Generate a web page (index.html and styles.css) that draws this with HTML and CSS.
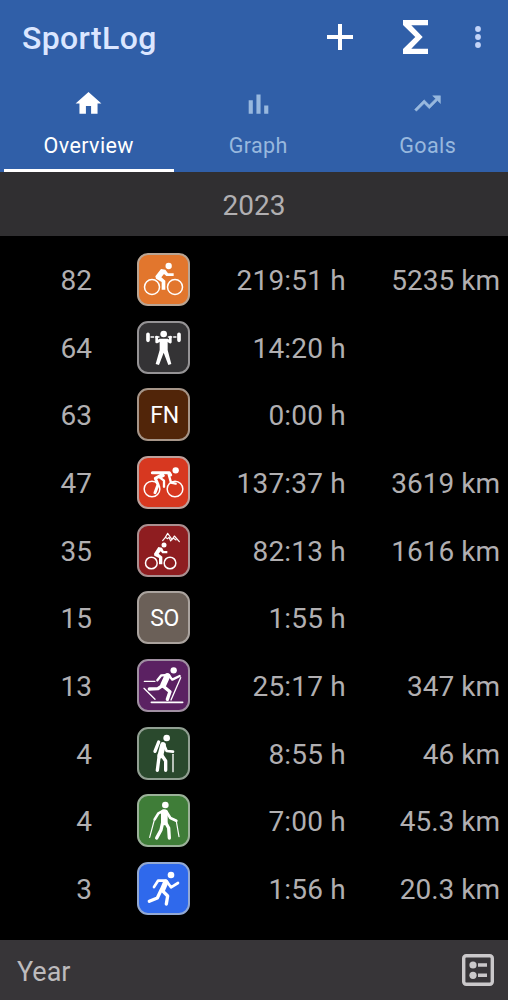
FILE: index.html
```
<!DOCTYPE html>
<html lang="en">
<head>
    <meta charset="UTF-8">
    <meta name="viewport" content="width=device-width, initial-scale=1.0">
    <title>SportLog</title>
    <link rel="stylesheet" href="styles.css">
</head>
<body>
    <div class="app">
        <header class="header">
            <div class="toolbar">
                <h1>SportLog</h1>
                <div class="actions">
                    <svg class="icon-add" viewBox="0 0 26 26"><path d="M0 13H26M13 0V26" fill="none" stroke="#fff" stroke-width="4"/></svg>
                    <svg class="icon-sum" viewBox="0 0 25 34"><path d="M0 0H25V5.3H8.3L19.7 17L8.3 28.7H25V34H0V29L12.3 17L0 5Z" fill="#fff"/></svg>
                    <svg class="icon-more" viewBox="0 0 6 22"><circle cx="3" cy="3" r="2.9"/><circle cx="3" cy="11" r="2.9"/><circle cx="3" cy="19" r="2.9"/></svg>
                </div>
            </div>
            <nav class="tabs">
                <a class="tab active">
                    <svg viewBox="0 0 24 24"><path d="M10 20v-6h4v6h5v-8h3L12 3 2 12h3v8z"/></svg>
                    <span>Overview</span>
                </a>
                <a class="tab">
                    <svg viewBox="0 0 24 24"><path d="M4.4 9.5h3.2V20H4.4zM10.4 5h3.2v15h-3.2zM16.4 13.5h3.2V20h-3.2z"/></svg>
                    <span>Graph</span>
                </a>
                <a class="tab">
                    <svg viewBox="0 0 24 24"><path stroke-width="0.4" d="M16 6l2.29 2.29-4.88 4.88-4-4L2 16.59 3.41 18l6-6 4 4 6.3-6.29L22 12V6z"/></svg>
                    <span>Goals</span>
                </a>
            </nav>
        </header>

        <h2 class="period">2023</h2>

        <main class="list">
            <div class="row">
                <span class="count">82</span>
                <div class="sport cycling">
                    <svg viewBox="27 27 147 147">
                        <circle cx="116" cy="60" r="9.5" class="fill"/>
                        <circle cx="66" cy="123" r="22.5" class="wheel"/><circle cx="135" cy="123" r="22.5" class="wheel"/>
                        <path d="M76 91L93 69L106 71L114 82H131V90H109L102 84L94 94L106 104V131H95V108L78 98Z" class="fill"/>
                    </svg>
                </div>
                <span class="time">219:51 h</span>
                <span class="distance">5235 km</span>
            </div>
            <div class="row">
                <span class="count">64</span>
                <div class="sport weights">
                    <svg viewBox="27 27 147 147">
                        <circle cx="101" cy="60" r="10" class="fill"/>
                        <path d="M54 61V79M147 61V79" class="line" stroke-width="11"/>
                        <path d="M63 69H71M77 69H87M115 69H125M131 69H138" class="line" stroke-width="4"/>
                        <path d="M80 69V84L91 78H111L121 84V69" class="line" stroke-width="8"/>
                        <path d="M89 76H113V108L124 150L115 153L101 116L87 153L77 150L89 108Z" class="fill"/>
                    </svg>
                </div>
                <span class="time">14:20 h</span>
                <span class="distance"></span>
            </div>
            <div class="row">
                <span class="count">63</span>
                <div class="sport fn">FN</div>
                <span class="time">0:00 h</span>
                <span class="distance"></span>
            </div>
            <div class="row">
                <span class="count">47</span>
                <div class="sport racing">
                    <svg viewBox="27 27 147 147">
                        <circle cx="137" cy="64" r="9.5" class="fill"/>
                        <circle cx="66" cy="120" r="23.5" class="wheel"/><circle cx="135" cy="120" r="23.5" class="wheel"/>
                        <path d="M67 71H118L122 78" class="line" stroke-width="9"/>
                        <path d="M98 76L76 88L84 107L75 131" class="line" stroke-width="9"/>
                        <path d="M101 80L90 86L102 95V113" class="line" stroke-width="7"/>
                        <path d="M116 76L123 101L137 104" class="line" stroke-width="7"/>
                    </svg>
                </div>
                <span class="time">137:37 h</span>
                <span class="distance">3619 km</span>
            </div>
            <div class="row">
                <span class="count">35</span>
                <div class="sport mtb">
                    <svg viewBox="27 27 147 147">
                        <circle cx="102" cy="84" r="7.5" class="fill"/>
                        <circle cx="64" cy="138" r="17.5" class="wheel"/><circle cx="120" cy="138" r="17.5" class="wheel"/>
                        <path d="M72 110L85 90L96 92L101 102H112V109H97L92 103L86 110L97 119V142H87V123L73 116Z" class="fill"/>
                        <path d="M98 71L106 61L113 49L121 60L126 68L133 57L148 74M106 61L113 65L117 61L122 72L129 63L138 69" class="line" stroke-width="3.5"/>
                    </svg>
                </div>
                <span class="time">82:13 h</span>
                <span class="distance">1616 km</span>
            </div>
            <div class="row">
                <span class="count">15</span>
                <div class="sport so">SO</div>
                <span class="time">1:55 h</span>
                <span class="distance"></span>
            </div>
            <div class="row">
                <span class="count">13</span>
                <div class="sport skiing">
                    <svg viewBox="27 27 147 147">
                        <circle cx="131" cy="55" r="9.5" class="fill"/>
                        <path d="M112 72L100 98" class="line" stroke-width="18"/>
                        <path d="M82 85L94 70L116 69L127 83L149 72" class="line" stroke-width="7"/>
                        <path d="M97 101L84 110L58 111M98 101L120 119L112 142" class="line" stroke-width="10"/>
                        <path d="M43 88H75M152 77L123 144M42 109L75 142" class="line" stroke-width="4"/>
                        <path d="M64 151H158" class="line" stroke-width="5"/>
                    </svg>
                </div>
                <span class="time">25:17 h</span>
                <span class="distance">347 km</span>
            </div>
            <div class="row">
                <span class="count">4</span>
                <div class="sport hiking">
                    <svg viewBox="27 27 147 147">
                        <circle cx="110" cy="54" r="10" class="fill"/>
                        <path d="M86 66L75 94" class="line" stroke-width="10"/>
                        <path d="M99 75L91 107" class="line" stroke-width="17"/>
                        <path d="M101 72L110 93L129 95" class="line" stroke-width="8"/>
                        <path d="M88 103L82 151M95 105L107 123V151" class="line" stroke-width="10"/>
                        <path d="M129 103V155" class="line" stroke-width="4"/>
                    </svg>
                </div>
                <span class="time">8:55 h</span>
                <span class="distance">46 km</span>
            </div>
            <div class="row">
                <span class="count">4</span>
                <div class="sport walking">
                    <svg viewBox="27 27 147 147">
                        <circle cx="106" cy="54" r="10" class="fill"/>
                        <path d="M103 77V105" class="line" stroke-width="20"/>
                        <path d="M99 72L85 79L74 97M109 73L121 93L139 101" class="line" stroke-width="8"/>
                        <path d="M98 107L93 129L80 153M106 105L116 123L118 153" class="line" stroke-width="10"/>
                        <path d="M73 99L59 151M139 103L147 149" class="line" stroke-width="3.5"/>
                    </svg>
                </div>
                <span class="time">7:00 h</span>
                <span class="distance">45.3 km</span>
            </div>
            <div class="row">
                <span class="count">3</span>
                <div class="sport running">
                    <svg viewBox="27 27 147 147">
                        <circle cx="123" cy="60" r="10" class="fill"/>
                        <path d="M107 82L98 103" class="line" stroke-width="16"/>
                        <path d="M72 96L84 77H109L123 97L144 84" class="line" stroke-width="8"/>
                        <path d="M93 106L82 129L58 139M97 107L113 123L109 147" class="line" stroke-width="10"/>
                    </svg>
                </div>
                <span class="time">1:56 h</span>
                <span class="distance">20.3 km</span>
            </div>
        </main>

        <footer class="footer">
            <span>Year</span>
            <svg viewBox="0 0 32 32">
                <rect x="1.7" y="1.7" width="28.6" height="28.6" rx="2.5" fill="none" stroke="#cac8ca" stroke-width="3.4"/>
                <circle cx="11" cy="11" r="3.6"/><circle cx="11" cy="21.3" r="3.6"/>
                <path d="M16 9.3h9v3.4h-9zM16 19.6h9V23h-9z"/>
            </svg>
        </footer>
    </div>
</body>
</html>
```

FILE: styles.css
```
* {
    margin: 0;
    padding: 0;
    box-sizing: border-box;
}

body {
    background-color: #000;
    color: #b1afb1;
    font-family: Roboto, sans-serif;
    font-size: 28px;
}

svg {
    display: block;
}

.app {
    display: flex;
    flex-direction: column;
    height: 1000px;
    overflow: hidden;
}

.header {
    height: 172px;
    background-color: #305fa8;
}

.toolbar {
    display: flex;
    justify-content: space-between;
    height: 76px;
    padding: 0 27px 0 22px;
    align-items: center;
}

h1 {
    font-size: 32px;
    font-weight: 500;
    letter-spacing: 0.35px;
    color: #dbe6ff;
}

.actions {
    display: flex;
    align-items: center;
    padding-bottom: 3px;
}

.icon-add {
    width: 26px;
    height: 26px;
    margin-right: 50px;
}

.icon-sum {
    width: 25px;
    height: 34px;
    margin-right: 47px;
}

.icon-more {
    width: 6px;
    height: 22px;
    fill: #c3d4f8;
}

.tabs {
    display: flex;
    height: 96px;
    margin-left: 4px;
}

.tab {
    display: flex;
    flex-direction: column;
    align-items: center;
    flex: 0 0 169.5px;
    padding-top: 12px;
    color: #98b8de;
    fill: #98b8de;
    stroke: #98b8de;
    stroke-width: 0;
    font-size: 21.5px;
    letter-spacing: 0.4px;
    border-bottom: 3px solid transparent;
}

.tab svg {
    width: 31px;
    height: 31px;
    margin-bottom: 14px;
}

.tab.active {
    color: #fff;
    fill: #fff;
    border-bottom-color: #fff;
}

.period {
    height: 64px;
    line-height: 67px;
    text-align: center;
    font-size: 28px;
    font-weight: 400;
    background-color: #302f31;
}

.list {
    flex: 1;
    padding-top: 9.5px;
}

.row {
    display: grid;
    grid-template-columns: 92px 45px 53px 156px 154px;
    align-items: center;
    height: 67.7px;
    line-height: 1;
    white-space: nowrap;
}

.count,
.time,
.distance {
    text-align: right;
    padding-top: 3px;
}

.time {
    letter-spacing: 0.2px;
}

.sport {
    display: flex;
    align-items: center;
    justify-content: center;
    grid-column: 3;
    width: 53px;
    height: 53px;
    border: 2px solid #aaa;
    border-radius: 11px;
    color: #fff;
    font-size: 23px;
    letter-spacing: -0.4px;
}

.fn,
.so {
    padding: 2px 0 0 2px;
}

.sport svg {
    width: 49px;
    height: 49px;
}

.fill {
    fill: #fff;
}

.wheel {
    fill: none;
    stroke: #fff;
    stroke-width: 4.5;
}

.line {
    fill: none;
    stroke: #fff;
    stroke-linecap: round;
    stroke-linejoin: round;
}

.cycling { background-color: #e2762d; border-color: #b9a594; }
.weights { background-color: #343335; border-color: #959395; }
.fn { background-color: #512509; border-color: #a69588; }
.racing { background-color: #d73820; border-color: #bda09b; }
.mtb { background-color: #8e1d20; border-color: #aa8f90; }
.so { background-color: #6b6058; border-color: #aaa39e; }
.skiing { background-color: #5b2162; border-color: #a08fa2; }
.hiking { background-color: #2a492d; border-color: #919f92; }
.walking { background-color: #3f7d38; border-color: #9bb199; }
.running { background-color: #2f69ec; border-color: #93a9d3; }

.footer {
    display: flex;
    justify-content: space-between;
    align-items: center;
    height: 60px;
    padding: 0 14px 0 17px;
    background-color: #373538;
    font-size: 27px;
    color: #bdbbbd;
}

.footer span {
    padding-top: 3px;
}

.footer svg {
    width: 32px;
    height: 32px;
    fill: #cac8ca;
}
```
